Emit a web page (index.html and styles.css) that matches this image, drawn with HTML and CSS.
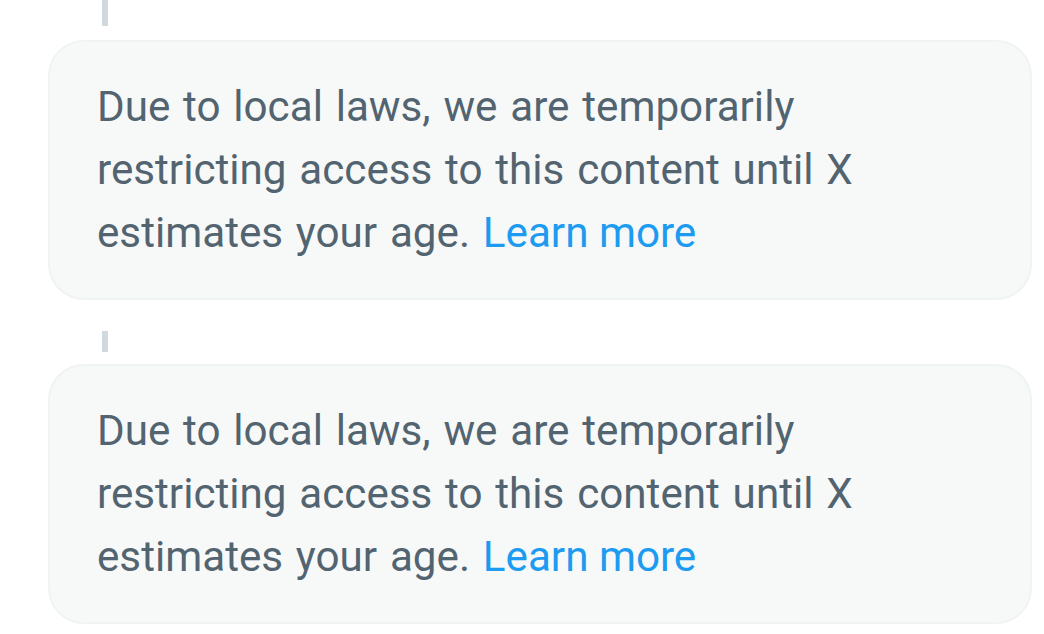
FILE: index.html
```html
<!DOCTYPE html>
<html lang="en">
<head>
    <meta charset="UTF-8">
    <meta name="viewport" content="width=device-width, initial-scale=1.0">
    <title>Thread</title>
    <link rel="stylesheet" href="styles.css">
</head>
<body>
    <main class="thread">
        <div class="connector top"></div>
        <div class="notice">
            <p>Due to local laws, we are temporarily restricting access to this content until X estimates your age. <a href="#">Learn more</a></p>
        </div>

        <div class="connector middle"></div>
        <div class="notice">
            <p>Due to local laws, we are temporarily restricting access to this content until X estimates your age. <a href="#">Learn more</a></p>
        </div>
    </main>
</body>
</html>
```

FILE: styles.css
```css
*{
    margin: 0;
    padding: 0;
    box-sizing: border-box;
}
body{
    background-color: white;
    font-family: Roboto, "Noto Sans", Arial, sans-serif;
}
.thread{
    padding: 0 12px 0 48px;
    display: flex;
    flex-direction: column;
}
.connector{
    width: 6px;
    margin-left: 54px;
    background-color: #cfd9de;
}
.connector.top{
    height: 26px;
    margin-bottom: 14px;
}
.connector.middle{
    height: 21px;
    margin-top: 31px;
    margin-bottom: 12px;
}
.notice{
    background-color: #f7f9f9;
    border: 2px solid #eff3f4;
    border-radius: 36px;
    padding: 33px 46px 33px 47px;
    min-height: 260px;
}
.notice p{
    color: #536471;
    font-size: 42.2px;
    line-height: 63px;
    word-spacing: 2.3px;
    max-width: 820px;
}
.notice a{
    color: #1d9bf0;
    text-decoration: none;
    word-spacing: 0;
}
```
